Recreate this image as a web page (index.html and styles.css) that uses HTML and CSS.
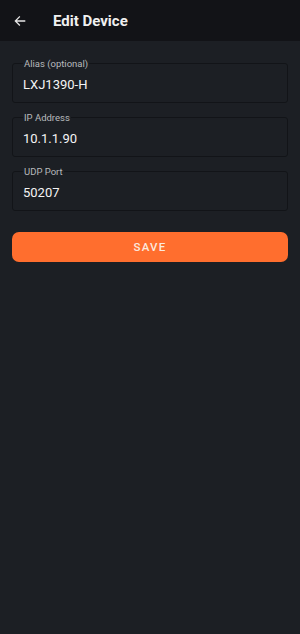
FILE: index.html
```html
<!DOCTYPE html>
<html lang="en">
<head>
    <meta charset="UTF-8">
    <meta name="viewport" content="width=device-width, initial-scale=1.0">
    <title>Edit Device</title>
    <link rel="stylesheet" href="styles.css">
</head>
<body>
    <div class="app">
        <header class="topbar">
            <button class="back-btn" aria-label="Back">
                <svg width="14" height="14" viewBox="0 0 24 24">
                    <path d="M20 12H5M11 5l-7 7 7 7" fill="none" stroke="#e6e6e6" stroke-width="2.2" stroke-linecap="square"/>
                </svg>
            </button>
            <h1>Edit Device</h1>
        </header>

        <main class="form">
            <fieldset class="field">
                <legend>Alias (optional)</legend>
                <input type="text" value="LXJ1390-H">
            </fieldset>

            <fieldset class="field">
                <legend>IP Address</legend>
                <input type="text" value="10.1.1.90">
            </fieldset>

            <fieldset class="field">
                <legend>UDP Port</legend>
                <input type="text" value="50207">
            </fieldset>

            <button class="save-btn">SAVE</button>
        </main>
    </div>
</body>
</html>
```

FILE: styles.css
```css
* {
    box-sizing: border-box;
    margin: 0;
    padding: 0;
    font-family: Roboto, "Liberation Sans", sans-serif;
}

body {
    background-color: #1c1f24;
    color: #f2f2f2;
}

.app {
    min-height: 100vh;
}

.topbar {
    display: flex;
    align-items: center;
    height: 41px;
    background-color: #121317;
    padding-left: 13px;
}

.back-btn {
    display: flex;
    align-items: center;
    justify-content: center;
    width: 14px;
    height: 14px;
    background: none;
    border: none;
}

.topbar h1 {
    margin-left: 26px;
    font-size: 15px;
    font-weight: 700;
    color: #f0f0f0;
}

.form {
    display: flex;
    flex-direction: column;
    padding: 17px 12px 0 12px;
}

.field {
    height: 45px;
    margin-bottom: 9px;
    border: 1px solid #121418;
    border-radius: 3px;
    padding: 0 10px;
}

.field legend {
    font-size: 9.5px;
    color: #b8babd;
    padding: 0 1px;
    line-height: 11px;
}

.field input {
    width: 100%;
    background: transparent;
    border: none;
    outline: none;
    color: #f4f4f4;
    font-size: 13px;
    padding-top: 8px;
}

.save-btn {
    margin-top: 12px;
    height: 30px;
    border: none;
    border-radius: 7px;
    background-color: #ff6e2e;
    color: #fbe9df;
    font-size: 11.5px;
    font-weight: 500;
    letter-spacing: 1.3px;
    cursor: pointer;
}
```
